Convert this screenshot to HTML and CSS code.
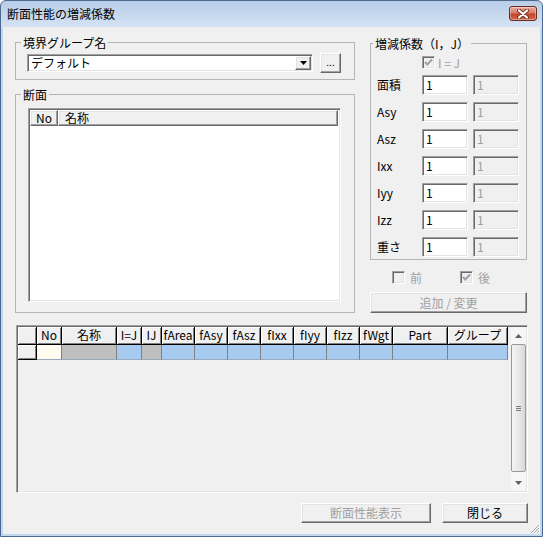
FILE: index.html
```html
<!DOCTYPE html>
<html lang="ja">
<head>
<meta charset="utf-8">
<title>断面性能の増減係数</title>
<link rel="stylesheet" href="styles.css">
</head>
<body>
<div class="window">
  <div class="titlebar">
    <span class="title">断面性能の増減係数</span>
    <div class="close">
      <svg width="12" height="10" viewBox="0 0 12 10"><path d="M2 1.5 L10 8.5 M10 1.5 L2 8.5" stroke="#7a2a1c" stroke-width="4" stroke-linecap="round"/><path d="M2 1.5 L10 8.5 M10 1.5 L2 8.5" stroke="#fff" stroke-width="2.2" stroke-linecap="round"/></svg>
    </div>
  </div>
  <div class="client">
    <div class="top">
      <div class="left-col">
        <fieldset class="group g1">
          <legend>境界グループ名</legend>
          <div class="combo-row">
            <div class="combo sunken">
              <span class="combo-text">デフォルト</span>
              <span class="combo-btn raised"><svg width="7" height="4" viewBox="0 0 7 4"><path d="M0 0 H7 L3.5 4 Z" fill="#000"/></svg></span>
            </div>
            <div class="btn raised dots-btn">...</div>
          </div>
        </fieldset>
        <fieldset class="group g2">
          <legend>断面</legend>
          <div class="list sunken">
            <div class="list-head">
              <div class="lh-cell raised lh-no">No</div>
              <div class="lh-cell raised lh-name">名称</div>
            </div>
          </div>
        </fieldset>
      </div>
      <div class="right-col">
        <fieldset class="group g3">
          <legend>増減係数（I，J）</legend>
          <div class="ij-row">
            <span class="cb sunken"><svg width="11" height="11" viewBox="0 0 11 11"><path d="M2 5 L4.3 7.5 L9 2.5" fill="none" stroke="#a0a0a0" stroke-width="2"/></svg></span>
            <span class="dis">I = J</span>
          </div>
          <div class="frows">
            <div class="frow"><span class="flabel">面積</span><div class="inp sunken">1</div><div class="inp sunken dis-inp">1</div></div>
            <div class="frow"><span class="flabel">Asy</span><div class="inp sunken">1</div><div class="inp sunken dis-inp">1</div></div>
            <div class="frow"><span class="flabel">Asz</span><div class="inp sunken">1</div><div class="inp sunken dis-inp">1</div></div>
            <div class="frow"><span class="flabel">Ixx</span><div class="inp sunken">1</div><div class="inp sunken dis-inp">1</div></div>
            <div class="frow"><span class="flabel">Iyy</span><div class="inp sunken">1</div><div class="inp sunken dis-inp">1</div></div>
            <div class="frow"><span class="flabel">Izz</span><div class="inp sunken">1</div><div class="inp sunken dis-inp">1</div></div>
            <div class="frow"><span class="flabel">重さ</span><div class="inp sunken">1</div><div class="inp sunken dis-inp">1</div></div>
          </div>
        </fieldset>
        <div class="cb-row">
          <span class="cb sunken"></span><span class="dis cb-text">前</span>
          <span class="cb sunken cb-second"><svg width="11" height="11" viewBox="0 0 11 11"><path d="M2 5 L4.3 7.5 L9 2.5" fill="none" stroke="#a0a0a0" stroke-width="2"/></svg></span><span class="dis cb-text">後</span>
        </div>
        <div class="btn raised add-btn dis">追加 / 変更</div>
      </div>
    </div>

    <div class="grid sunken">
      <div class="gtable">
        <div class="hc"></div>
        <div class="hc">No</div>
        <div class="hc">名称</div>
        <div class="hc">I=J</div>
        <div class="hc">IJ</div>
        <div class="hc">fArea</div>
        <div class="hc">fAsy</div>
        <div class="hc">fAsz</div>
        <div class="hc">fIxx</div>
        <div class="hc">fIyy</div>
        <div class="hc">fIzz</div>
        <div class="hc">fWgt</div>
        <div class="hc">Part</div>
        <div class="hc">グループ</div>

        <div class="hc rh"></div>
        <div class="dc cream"></div>
        <div class="dc gray"></div>
        <div class="dc blue"></div>
        <div class="dc gray"></div>
        <div class="dc blue"></div>
        <div class="dc blue"></div>
        <div class="dc blue"></div>
        <div class="dc blue"></div>
        <div class="dc blue"></div>
        <div class="dc blue"></div>
        <div class="dc blue"></div>
        <div class="dc blue"></div>
        <div class="dc blue"></div>
      </div>
      <div class="vscroll">
        <div class="sarrow"><svg width="7" height="4" viewBox="0 0 7 4"><path d="M0 4 H7 L3.5 0 Z" fill="#606060"/></svg></div>
        <div class="thumb"><span class="grip-lines"></span></div>
        <div class="sarrow"><svg width="7" height="4" viewBox="0 0 7 4"><path d="M0 0 H7 L3.5 4 Z" fill="#606060"/></svg></div>
      </div>
    </div>

    <div class="bottom">
      <div class="btn raised show-btn dis">断面性能表示</div>
      <div class="btn raised close-btn">閉じる</div>
    </div>

    <svg class="resize-grip" width="11" height="11" viewBox="0 0 11 11">
      <path d="M10 2 L2 10 M10 5 L5 10 M10 8 L8 10" stroke="#a0a0a0" stroke-width="1"/>
      <path d="M11 2 L2 11 M11 5 L5 11 M11 8 L8 11" stroke="#fff" stroke-width="1"/>
    </svg>
  </div>
</div>
</body>
</html>
```

FILE: styles.css
```css
* { box-sizing: border-box; }
html, body { margin: 0; padding: 0; }
body {
  width: 543px;
  height: 537px;
  overflow: hidden;
  background: #ffffff;
  font-family: "Noto Sans CJK JP", "Noto Sans", sans-serif;
  font-size: 12px;
  color: #000;
}

.window {
  width: 543px;
  height: 537px;
  border: 1px solid #4d6a8e;
  border-radius: 6px 6px 0 0;
  background: linear-gradient(to bottom, #b8cde8 0, #d5e2f3 26px, #c3d7ee 27px, #c3d7ee 100%);
  display: flex;
  flex-direction: column;
}

.titlebar {
  height: 26px;
  flex: none;
  display: flex;
  align-items: center;
  padding-left: 6px;
  position: relative;
}
.title { line-height: 14px; }

.close {
  position: absolute;
  top: 5px;
  right: 5px;
  width: 28px;
  height: 15px;
  border: 1px solid #6b2a1e;
  border-radius: 3px;
  background: linear-gradient(to bottom, #eab0a2 0%, #d67a64 45%, #c3452d 55%, #d06a52 100%);
  box-shadow: inset 0 0 0 1px rgba(255,255,255,0.35);
  display: flex;
  align-items: center;
  justify-content: center;
}

.client {
  flex: 1;
  margin: 0 2px 2px 2px;
  background: #f0f0f0;
  padding: 8px 12px 0 12px;
  display: flex;
  flex-direction: column;
  position: relative;
}

/* 3D borders */
.sunken {
  border: 1px solid;
  border-color: #a0a0a0 #ffffff #ffffff #a0a0a0;
  box-shadow: inset 1px 1px 0 #696969, inset -1px -1px 0 #e3e3e3;
}
.raised {
  border: 1px solid;
  border-color: #ffffff #696969 #696969 #ffffff;
  box-shadow: inset -1px -1px 0 #a0a0a0, inset 1px 1px 0 #e3e3e3;
  background: #f0f0f0;
}

.dis { color: #a0a0a0; }

.top {
  display: flex;
  gap: 15px;
  height: 278px;
  flex: none;
}
.left-col {
  width: 340px;
  display: flex;
  flex-direction: column;
}
.right-col {
  width: 157px;
  padding-top: 1px;
  display: flex;
  flex-direction: column;
}

.group {
  margin: 0;
  padding: 0;
  min-width: 0;
  border: 1px solid #b4b4b4;
}
.group legend {
  padding: 0 2px;
  margin-left: 5px;
  line-height: 15px;
  font-size: 12px;
}

.g1 { height: 45px; }
.combo-row {
  display: flex;
  align-items: center;
  gap: 7px;
  padding: 3px 0 0 11px;
}
.combo {
  width: 286px;
  height: 18px;
  background: #fff;
  display: flex;
  align-items: center;
  padding: 1px 1px 1px 3px;
}
.combo-text { flex: 1; line-height: 14px; }
.combo-btn {
  width: 16px;
  height: 14px;
  display: flex;
  align-items: center;
  justify-content: center;
}
.btn {
  display: flex;
  align-items: center;
  justify-content: center;
  line-height: 14px;
}
.dots-btn {
  width: 21px;
  height: 20px;
  font-size: 10px;
  padding-bottom: 2px;
}

.g2 { height: 226px; margin-top: 7px; }
.list {
  margin: 6px 0 0 12px;
  width: 313px;
  height: 194px;
  background: #fff;
  padding: 1px;
}
.list-head {
  display: flex;
  height: 16px;
  width: 308px;
}
.lh-cell {
  height: 16px;
  line-height: 14px;
  padding-left: 5px;
}
.lh-no { width: 28px; }
.lh-name { width: 280px; padding-left: 6px; }

.g3 { height: 225px; margin-left: 0; }
.g3 legend { margin-left: 2px; }
.ij-row {
  display: flex;
  align-items: center;
  gap: 3px;
  height: 13px;
  margin: 5px 0 0 51px;
}
.cb {
  width: 13px;
  height: 13px;
  background: #f0f0f0;
  display: inline-flex;
  align-items: center;
  justify-content: center;
  flex: none;
}
.cb svg { display: block; }

.frows {
  display: flex;
  flex-direction: column;
  gap: 7px;
  margin: 6px 0 0 6px;
}
.frow {
  display: flex;
  align-items: center;
  height: 20px;
}
.flabel { width: 45px; line-height: 14px; }
.inp {
  width: 46px;
  height: 20px;
  background: #fff;
  padding: 1px 0 0 3px;
  line-height: 15px;
}
.inp + .inp { margin-left: 5px; }
.dis-inp { background: #f0f0f0; color: #a0a0a0; }

.cb-row {
  display: flex;
  align-items: center;
  height: 13px;
  margin: 11px 0 0 22px;
}
.cb-text { margin-left: 5px; line-height: 14px; }
.cb-second { margin-left: 38px; }

.add-btn {
  width: 157px;
  height: 21px;
  margin-top: 8px;
}

/* data grid */
.grid {
  margin: 12px 0 0 1px;
  width: 512px;
  height: 168px;
  flex: none;
  padding: 1px;
  display: flex;
  background: #f0f0f0;
}
.gtable {
  display: grid;
  grid-template-columns: 19px 25px 55px 25px 20px repeat(7, 33px) 55px 60px;
  grid-template-rows: 18px 15px;
  align-content: start;
}
.hc {
  border-right: 1px solid #000;
  border-bottom: 1px solid #000;
  box-shadow: inset 1px 1px 0 #fff, inset -1px -1px 0 #808080;
  background: #f0f0f0;
  text-align: center;
  line-height: 16px;
  white-space: nowrap;
  overflow: hidden;
}
.hc.rh { line-height: 13px; }
.dc {
  border-right: 1px solid #808080;
  border-bottom: 1px solid #9aa9bb;
}
.cream { background: #fffbee; }
.gray { background: #bfbfbf; }
.blue { background: #a6caf0; }

.vscroll {
  margin-left: auto;
  width: 15px;
  height: 164px;
  display: flex;
  flex-direction: column;
  background: #f6f6f6;
}
.sarrow {
  height: 17px;
  flex: none;
  display: flex;
  align-items: center;
  justify-content: center;
}
.thumb {
  height: 128px;
  flex: none;
  border: 1px solid #999999;
  border-radius: 2px;
  background: linear-gradient(to right, #f4f4f4, #e6e6e6 60%, #d8d8d8);
  display: flex;
  align-items: center;
  justify-content: center;
}
.thumb + .sarrow { margin-top: 2px; }
.grip-lines {
  width: 5px;
  height: 5px;
  border-top: 1px solid #7a7a7a;
  border-bottom: 1px solid #7a7a7a;
  background: linear-gradient(to bottom, transparent 1px, #7a7a7a 1px, #7a7a7a 2px, transparent 2px);
}

.bottom {
  display: flex;
  justify-content: flex-end;
  gap: 11px;
  margin-top: 10px;
}
.show-btn { width: 130px; height: 20px; }
.close-btn { width: 86px; height: 20px; }

.resize-grip {
  position: absolute;
  right: 0;
  bottom: 0;
}
```
